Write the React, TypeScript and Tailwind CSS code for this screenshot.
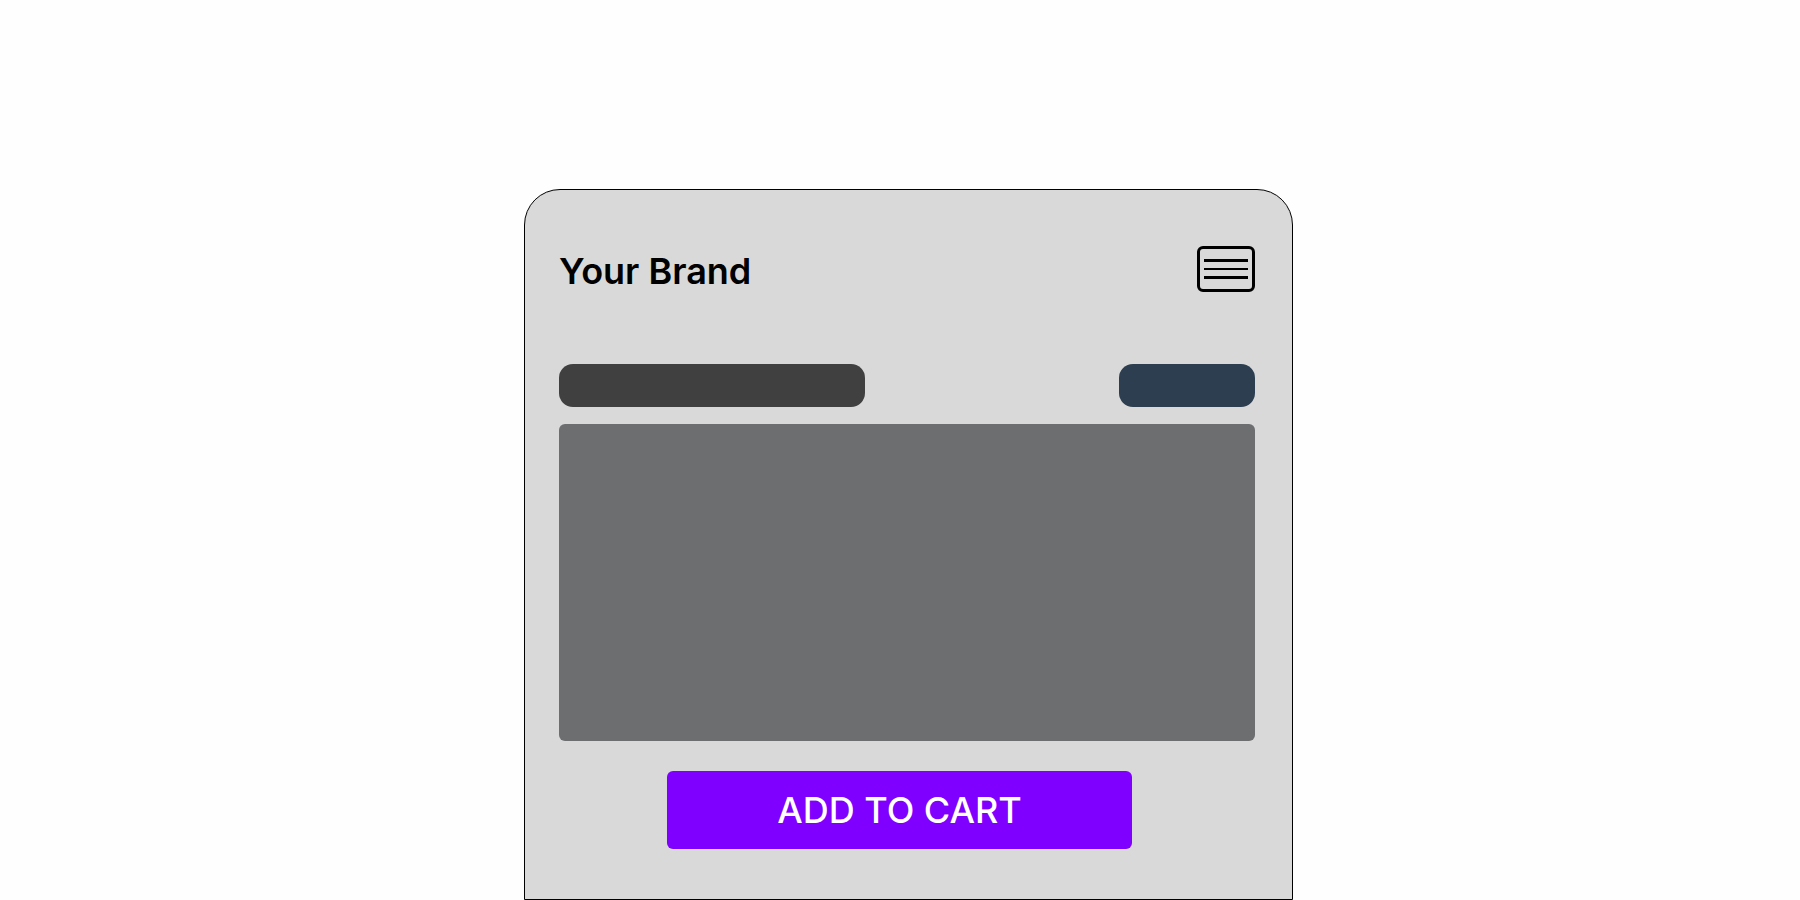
export default function App() {
  return (
    <div className="min-h-screen w-full bg-[#fefefe] pt-[189px] font-['Inter',sans-serif]">
      <div className="ml-[524px] h-[711px] w-[769px] rounded-t-[36px] border border-black bg-[#d9d9d9] pl-[34px] pr-[37px] pt-[55px]">
        <div className="flex h-[48px] items-center justify-between">
          <h1 className="mt-[4px] text-[36px] font-semibold leading-[44px] text-black">Your Brand</h1>
          <button className="flex h-[46px] w-[58px] flex-col items-center justify-center gap-[6px] rounded-[6px] border-[3px] border-black">
            <span className="h-[2.5px] w-[44px] bg-black" />
            <span className="h-[2.5px] w-[44px] bg-black" />
            <span className="h-[2.5px] w-[44px] bg-black" />
          </button>
        </div>

        <div className="mt-[71px] flex justify-between">
          <div className="h-[43px] w-[306px] rounded-[14px] bg-[#404040]" />
          <div className="h-[43px] w-[136px] rounded-[14px] bg-[#2c3e50]" />
        </div>

        <div className="mt-[17px] h-[317px] w-full rounded-[6px] bg-[#6d6e70]" />

        <button className="ml-[108px] mt-[30px] flex h-[78px] w-[465px] items-center justify-center rounded-[6px] bg-[#7f00ff] text-[36px] font-medium text-white">
          ADD TO CART
        </button>
      </div>
    </div>
  );
}
